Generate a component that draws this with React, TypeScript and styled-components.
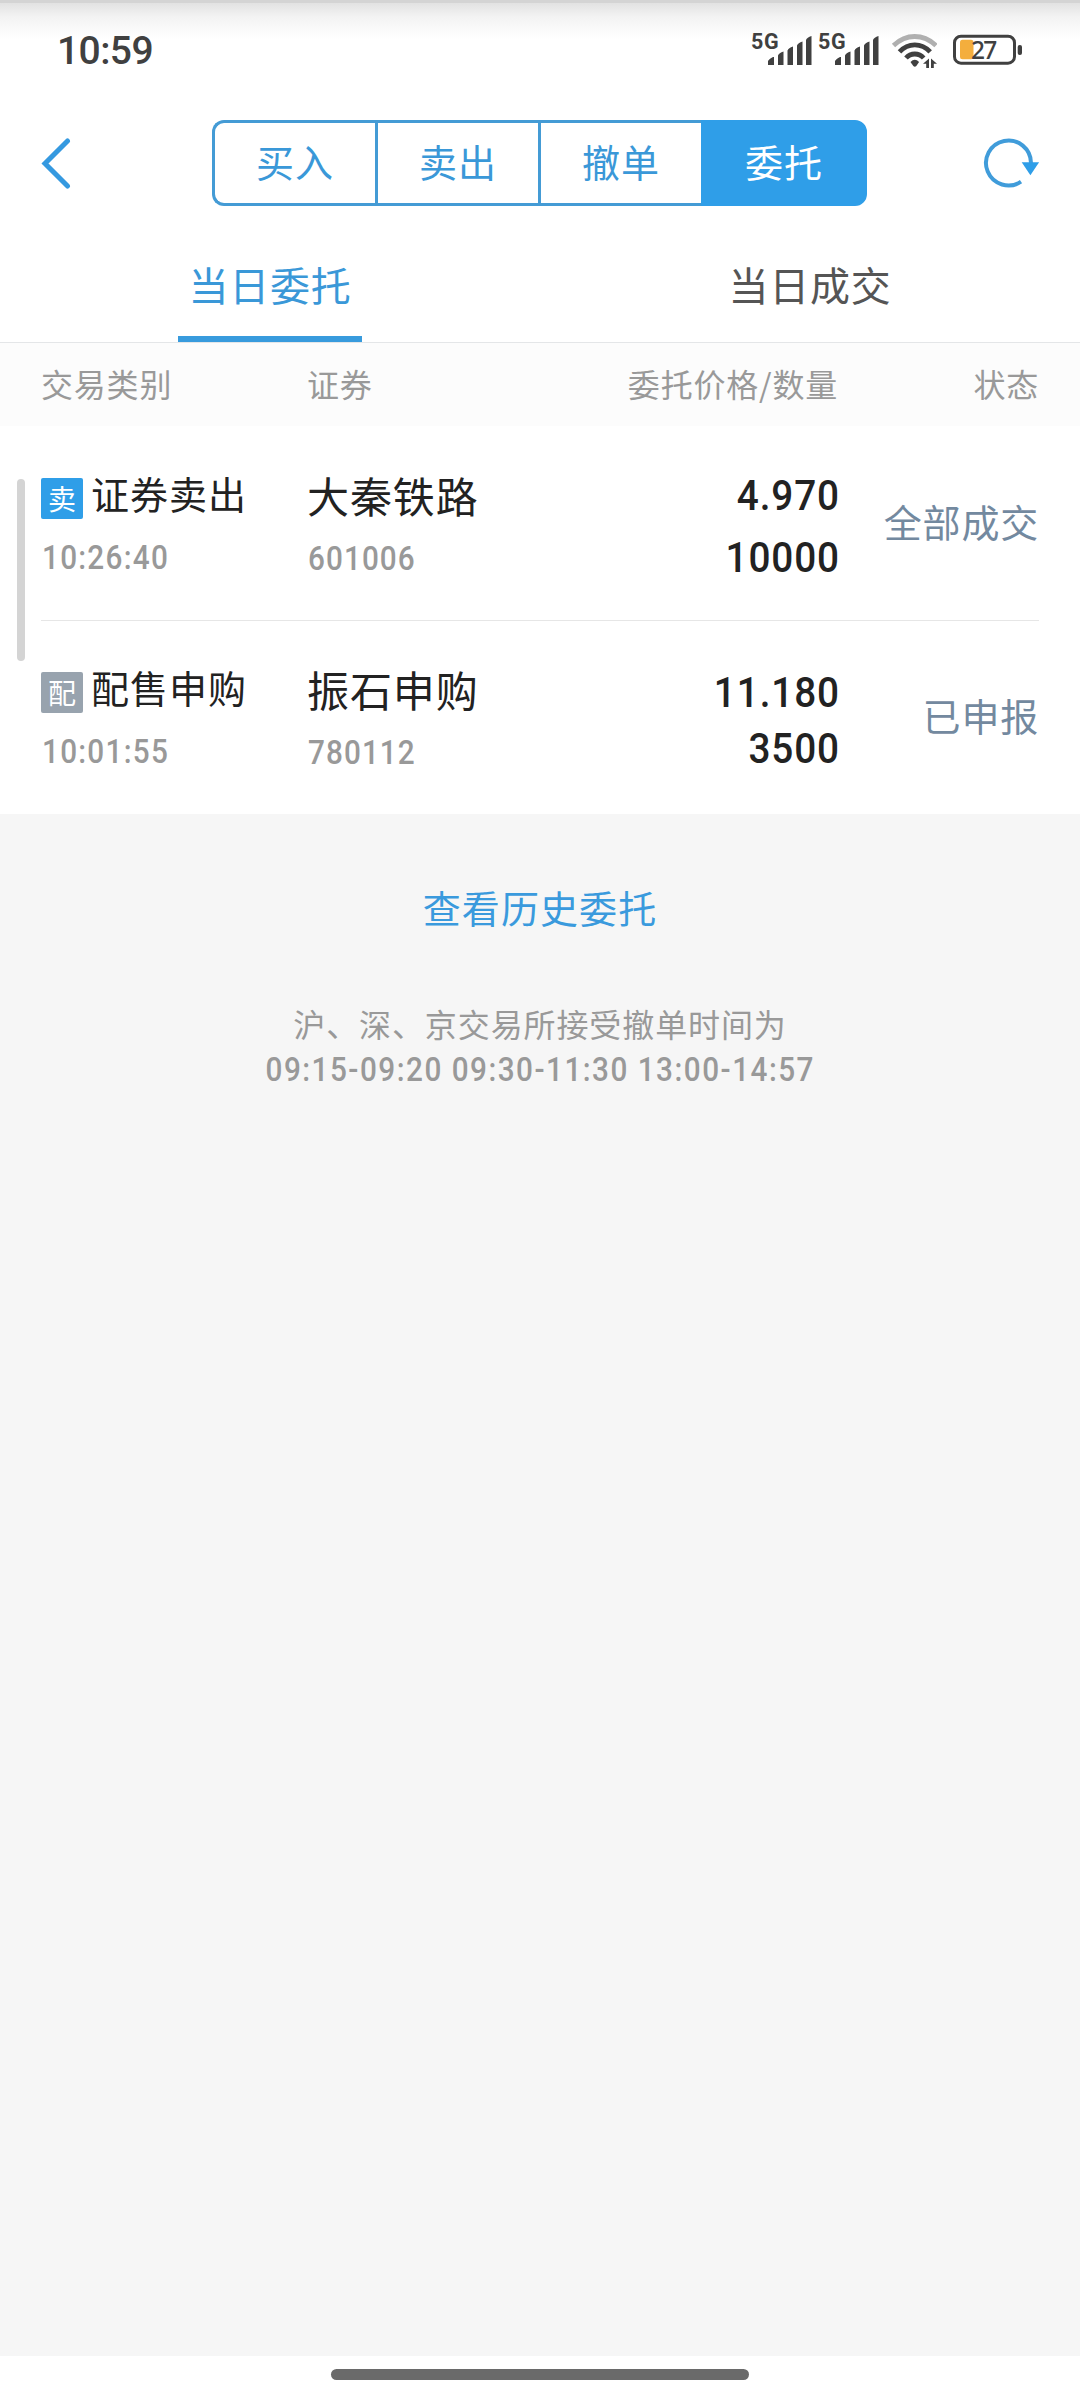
import React from "react";
import styled, { createGlobalStyle } from "styled-components";

const BLUE = "#2f9ee8";
const CJK = '"Noto Sans CJK SC", sans-serif';
const NUM = 'Roboto, "Noto Sans CJK SC", sans-serif';

const GlobalStyle = createGlobalStyle`
  * { box-sizing: border-box; }
  body { margin: 0; background: #fff; }
`;

const Screen = styled.div`
  width: 1080px;
  height: 2400px;
  display: flex;
  flex-direction: column;
  overflow: hidden;
  background: #fff;
  font-family: ${CJK};
`;

const StatusBar = styled.header`
  height: 107px;
  flex: none;
  display: flex;
  justify-content: space-between;
  padding: 30px 57px 0 57px;
  border-top: 3px solid #d4d4d4;
  background: linear-gradient(#e2e2e2, #f3f3f3 14px, #fefefe 34px, #fff 36px);
  color: #404040;
  font-family: ${NUM};
`;

const Clock = styled.div`
  height: 40px;
  line-height: 40px;
  font-size: 39px;
  font-weight: 500;
  letter-spacing: -0.6px;
  margin-top: -2px;
`;

const Indicators = styled.div`
  display: flex;
  height: 40px;
`;

const Signal = styled.div`
  position: relative;
  width: 67px;
  height: 40px;

  svg { display: block; }
`;

const SignalLabel = styled.span`
  position: absolute;
  left: -1px;
  top: -3px;
  font: 700 21.500px/24px ${NUM};
  letter-spacing: 0.6px;
`;

const Battery = styled.div`
  position: relative;
  width: 70px;
  height: 40px;
  margin-left: 16px;

  svg { display: block; }
`;

const BatteryLevel = styled.span`
  position: absolute;
  left: 18px;
  top: 4px;
  font: 500 24.500px/26px "Noto Sans", sans-serif;
  letter-spacing: -1.8px;
`;

const NavBar = styled.nav`
  height: 112px;
  flex: none;
  display: grid;
  grid-template-columns: 212px 655px 1fr;
  align-items: center;
`;

const IconButton = styled.button<{ $end?: boolean }>`
  display: flex;
  justify-content: ${(p) => (p.$end ? "flex-end" : "flex-start")};
  padding: 0 40px;
  border: 0;
  background: none;
`;

const Segments = styled.div`
  height: 86px;
  display: grid;
  grid-template-columns: 163px 163px 163px 166px;
`;

const Segment = styled.div<{ $active?: boolean }>`
  display: flex;
  align-items: center;
  justify-content: center;
  padding-bottom: 5px;
  font-size: 38px;
  letter-spacing: 1px;
  color: ${(p) => (p.$active ? "#fff" : "#3a98d8")};
  background: ${(p) => (p.$active ? BLUE : "#fff")};
  border: 3px solid ${(p) => (p.$active ? BLUE : "#449bd5")};
  border-right-width: 0;

  &:first-child { border-radius: 12px 0 0 12px; }
  &:last-child { border-radius: 0 12px 12px 0; border-right-width: 3px; }
`;

const Tabs = styled.div`
  height: 124px;
  flex: none;
  display: flex;
  border-bottom: 1px solid #e4e6e8;
`;

const Tab = styled.div<{ $active?: boolean }>`
  flex: 1;
  display: flex;
  justify-content: center;

  span {
    width: 184px;
    height: 123px;
    padding-top: 35px;
    text-align: center;
    font-size: 40px;
    line-height: 60px;
    letter-spacing: 0.8px;
    white-space: nowrap;
    color: ${(p) => (p.$active ? "#3a98d8" : "#555")};
    border-bottom: 6px solid ${(p) => (p.$active ? "#389bdd" : "transparent")};
  }
`;

const columns = `
  display: grid;
  grid-template-columns: 266px 191px 340px 201px;
  margin: 0 41px;
`;

const TableHead = styled.div`
  height: 83px;
  flex: none;
  background: #fcfcfc;
`;

const HeadRow = styled.div`
  ${columns}
  height: 79px;
  align-items: center;
  font-size: 32px;
  letter-spacing: 0.8px;
  color: #999;
`;

const HeadCell = styled.div<{ $right?: boolean }>`
  text-align: ${(p) => (p.$right ? "right" : "left")};
`;

const Orders = styled.section`
  position: relative;
  flex: none;
`;

const ScrollThumb = styled.div`
  position: absolute;
  left: 17px;
  top: 53px;
  width: 8px;
  height: 182px;
  border-radius: 4px;
  background: #d4d4d4;
`;

const OrderRow = styled.article`
  ${columns}
  height: 194px;

  & + & { box-shadow: inset 0 1px #e6e6e6; }
`;

const Cell = styled.div`
  display: flex;
  flex-direction: column;
  padding-top: 41px;
`;

const Kind = styled.div`
  display: flex;
  align-items: flex-start;
  height: 56px;
  line-height: 51px;
  font-size: 38px;
  letter-spacing: 1px;
  color: #222;
  white-space: nowrap;
`;

const Badge = styled.span<{ $color: string }>`
  width: 42px;
  height: 41px;
  margin: 11px 8px 0 0;
  border-radius: 2px;
  background: ${(p) => p.$color};
  color: #fff;
  font-size: 28px;
  line-height: 40px;
  letter-spacing: 0;
  text-align: center;
`;

const Name = styled.div`
  height: 60px;
  line-height: 55px;
  font-size: 42px;
  letter-spacing: 0.9px;
  color: #222;
  white-space: nowrap;
`;

const Sub = styled.div<{ $wide?: boolean }>`
  height: 36px;
  line-height: 36px;
  margin: ${(p) => (p.$wide ? "17px 0 0 1px" : "14px 0 0 1px")};
  font-family: ${NUM};
  font-size: 33px;
  font-weight: 500;
  letter-spacing: ${(p) => (p.$wide ? 1.4 : 1.2)}px;
  transform: scaleX(0.9);
  transform-origin: left;
  color: #999;
`;

const Figures = styled.div<{ $leading: number }>`
  display: flex;
  flex-direction: column;
  justify-content: center;
  padding-top: 5px;
  text-align: right;
  font-family: ${NUM};
  font-size: 43px;
  font-weight: 500;
  letter-spacing: 1px;
  line-height: ${(p) => p.$leading}px;
  margin-right: -2px;
  transform: scaleX(0.9);
  transform-origin: right;
  color: #222;
`;

const State = styled.div`
  display: flex;
  align-items: center;
  justify-content: flex-end;
  padding-bottom: 5px;
  font-size: 38px;
  letter-spacing: 0.8px;
  color: #73899f;
`;

const Footer = styled.main`
  flex: 1;
  display: flex;
  flex-direction: column;
  align-items: center;
  padding-top: 64px;
  background: #f6f6f6;
`;

const HistoryLink = styled.a`
  font-size: 38px;
  line-height: 58px;
  letter-spacing: 1.1px;
  color: #3a9add;
`;

const Note = styled.p`
  margin: 65px 0 0;
  font-size: 32px;
  line-height: 44px;
  letter-spacing: 0.9px;
  text-align: center;
  color: #999;
`;

const Hours = styled.p`
  margin: 3px 0 0;
  font-family: ${NUM};
  font-size: 33px;
  font-weight: 500;
  line-height: 44px;
  letter-spacing: 1.66px;
  white-space: nowrap;
  transform: scaleX(0.9);
  color: #999;
`;

const HomeArea = styled.footer`
  height: 44px;
  flex: none;
  display: flex;
  justify-content: center;
  padding-top: 13px;
  background: #fff;
`;

const HomeBar = styled.div`
  width: 418px;
  height: 11px;
  border-radius: 6px;
  background: #6a6a6a;
`;

const SignalIcon = () => (
  <Signal>
    <SignalLabel>5G</SignalLabel>
    <svg width="67" height="40" viewBox="0 0 67 40" fill="#404040">
      <path d="M16 28.500q0-2 5-4.500h1v8h-6zM26 22.500q1-2.500 5.500-4v13.500h-5.500zM35.500 17.500q1-2.500 5.500-4v18.500h-5.500zM45 12.500q1-2.500 5.500-4v23.500h-5.500zM54 7q1-2.500 5.500-4v29h-5.500z" />
    </svg>
  </Signal>
);

const WifiIcon = () => (
  <svg width="51" height="40" viewBox="886 33 51 40" fill="none" stroke="#404040" strokeWidth="4.800">
    <path d="M893.500 45.500Q903 36.500 914.700 36.500T936 45.500" stroke="#b0b0b0" />
    <path d="M899.500 51.800Q906 44.800 914.800 44.800T930.200 51.800" />
    <path d="M906 58Q909.500 54 914.800 54T923.700 58" />
    <path d="M910.500 62q4.300-4.500 8.600 0l-2.800 4q-1.500 1.500-3 0z" fill="#404040" stroke="none" />
    <path d="M929 58.500v9.500h-2.800v-4.200h-3.200zM931 68v-9.500l6 5.200h-3.200v4.300z" fill="#404040" stroke="none" />
  </svg>
);

const orders = [
  { badge: "卖", color: BLUE, kind: "证券卖出", time: "10:26:40", name: "大秦铁路", code: "601006", price: "4.970", qty: "10000", state: "全部成交", leading: 62 },
  { badge: "配", color: "#98a3ae", kind: "配售申购", time: "10:01:55", name: "振石申购", code: "780112", price: "11.180", qty: "3500", state: "已申报", leading: 56 },
];

export default function App() {
  return (
    <Screen>
      <GlobalStyle />
      <StatusBar>
        <Clock>10:59</Clock>
        <Indicators>
          <SignalIcon />
          <SignalIcon />
          <WifiIcon />
          <Battery>
            <svg width="70" height="40" viewBox="953 33 70 40">
              <rect x="954.500" y="36.200" width="60" height="27" rx="6.500" fill="none" stroke="#404040" strokeWidth="3" />
              <rect x="960" y="39.800" width="13.500" height="19.500" rx="2.500" fill="#f4ae3d" />
              <rect x="1017.700" y="45" width="4.300" height="10" rx="2" fill="#404040" />
            </svg>
            <BatteryLevel>27</BatteryLevel>
          </Battery>
        </Indicators>
      </StatusBar>

      <NavBar>
        <IconButton aria-label="返回">
          <svg width="32" height="52" viewBox="40 137 32 52" fill="none" stroke="#3599e0" strokeWidth="5">
            <path d="M67.500 141 45 163.500l22.500 22.500" strokeLinecap="round" />
          </svg>
        </IconButton>
        <Segments>
          <Segment>买入</Segment>
          <Segment>卖出</Segment>
          <Segment>撤单</Segment>
          <Segment $active>委托</Segment>
        </Segments>
        <IconButton $end aria-label="刷新">
          <svg width="57" height="52" viewBox="983 137 57 52">
            <path d="M1031 163A22.500 22.500 0 1 0 1021 181.700" fill="none" stroke="#409cda" strokeWidth="4" />
            <path d="M1021.700 162.300h17.400l-8.700 13z" fill={BLUE} />
          </svg>
        </IconButton>
      </NavBar>

      <Tabs>
        <Tab $active><span>当日委托</span></Tab>
        <Tab><span>当日成交</span></Tab>
      </Tabs>

      <TableHead>
        <HeadRow>
          <HeadCell>交易类别</HeadCell>
          <HeadCell>证券</HeadCell>
          <HeadCell $right>委托价格/数量</HeadCell>
          <HeadCell $right>状态</HeadCell>
        </HeadRow>
      </TableHead>

      <Orders>
        <ScrollThumb />
        {orders.map((o) => (
          <OrderRow key={o.code}>
            <Cell>
              <Kind><Badge $color={o.color}>{o.badge}</Badge>{o.kind}</Kind>
              <Sub $wide>{o.time}</Sub>
            </Cell>
            <Cell>
              <Name>{o.name}</Name>
              <Sub>{o.code}</Sub>
            </Cell>
            <Figures $leading={o.leading}>
              <div>{o.price}</div>
              <div>{o.qty}</div>
            </Figures>
            <State>{o.state}</State>
          </OrderRow>
        ))}
      </Orders>

      <Footer>
        <HistoryLink>查看历史委托</HistoryLink>
        <Note>沪、深、京交易所接受撤单时间为</Note>
        <Hours>09:15-09:20 09:30-11:30 13:00-14:57</Hours>
      </Footer>

      <HomeArea><HomeBar /></HomeArea>
    </Screen>
  );
}
